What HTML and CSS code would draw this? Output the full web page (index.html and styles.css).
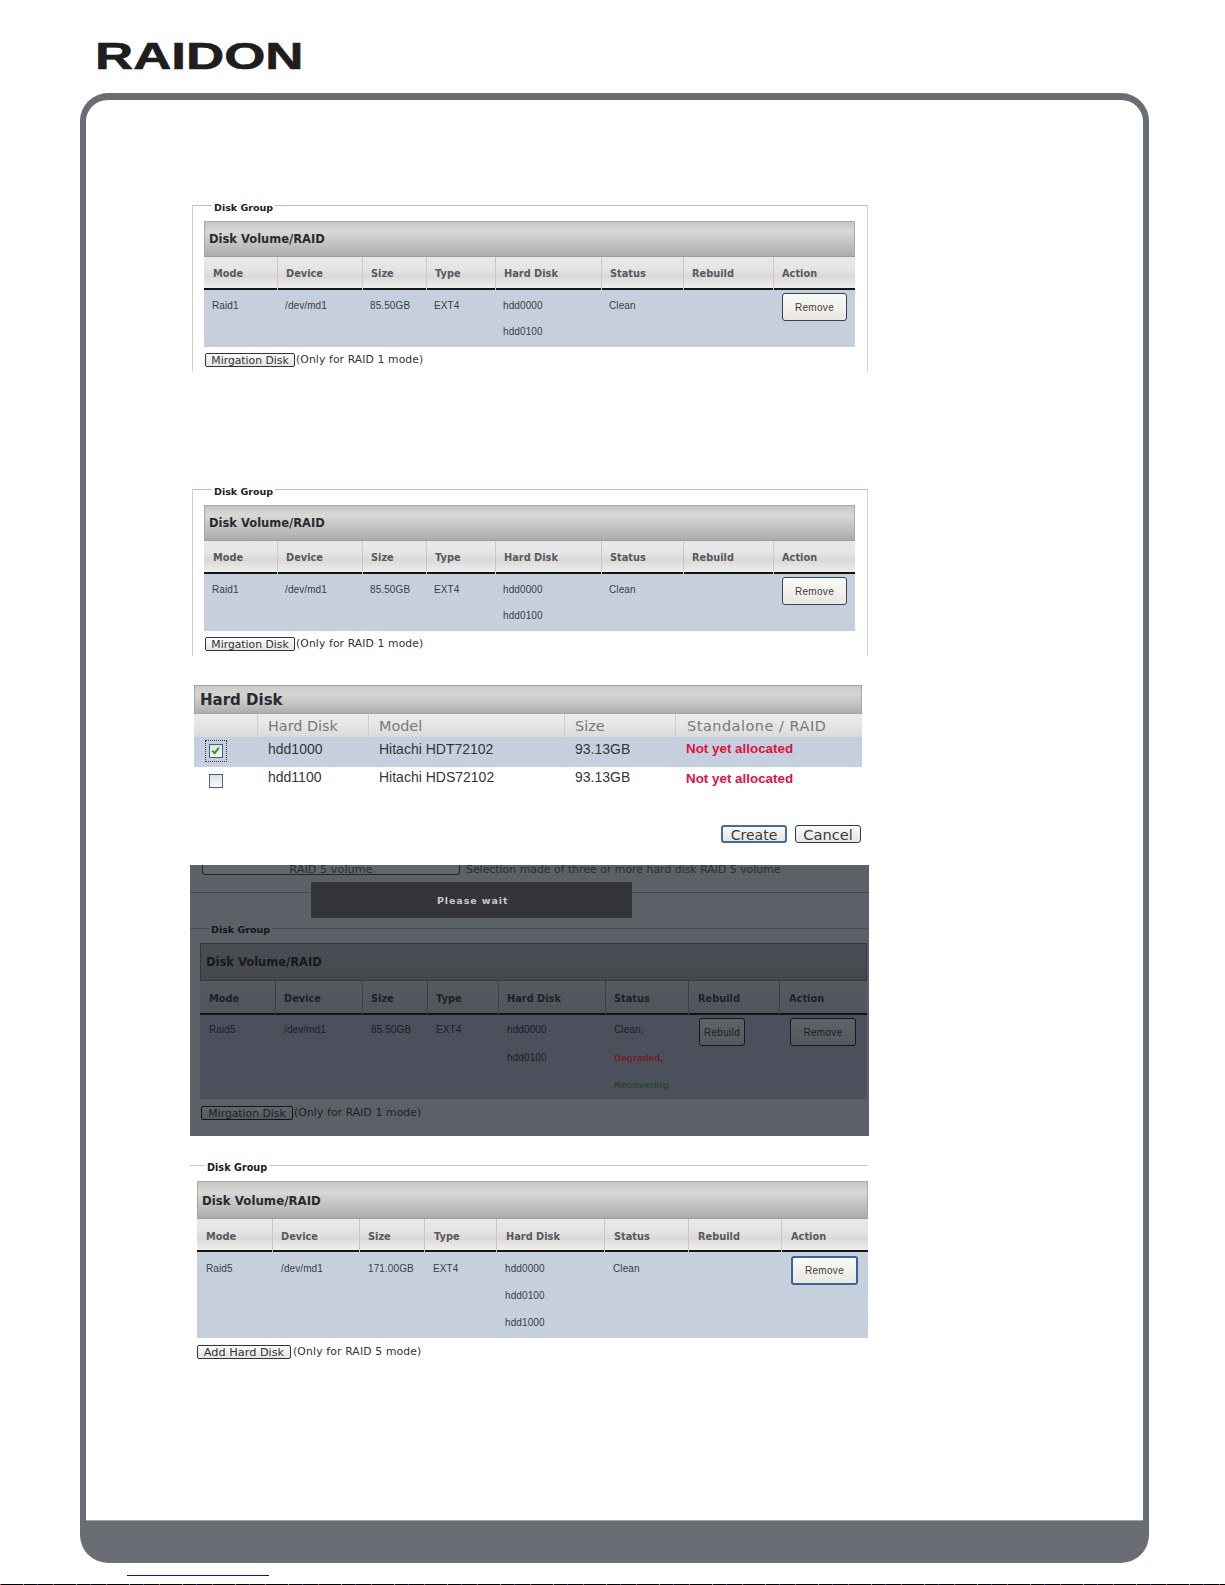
FILE: index.html
```html
<!DOCTYPE html>
<html lang="en">
<head>
<meta charset="utf-8">
<title>RAIDON</title>
<link rel="stylesheet" href="styles.css">
</head>
<body>
<header class="brand"><span class="logo">RAIDON</span></header>
<main class="sheet">
  <div class="sheet-inner">

    <section class="panel panel-boxed panel-first">
      <div class="legend">Disk Group</div>
      <div class="title">Disk Volume/RAID</div>
      <div class="grid cols">
        <div>Mode</div><div>Device</div><div>Size</div><div>Type</div><div>Hard Disk</div><div>Status</div><div>Rebuild</div><div>Action</div>
      </div>
      <div class="grid rows">
        <div class="ln">Raid1</div><div class="ln">/dev/md1</div><div class="ln">85.50GB</div><div class="ln">EXT4</div>
        <div><div class="ln">hdd0000</div><div class="ln">hdd0100</div></div>
        <div class="ln">Clean</div><div></div>
        <div><button class="btn-remove">Remove</button></div>
      </div>
      <div class="foot"><button class="btn-small btn-mig">Mirgation Disk</button><span>(Only for RAID 1 mode)</span></div>
    </section>

    <section class="panel panel-boxed panel-second">
      <div class="legend">Disk Group</div>
      <div class="title">Disk Volume/RAID</div>
      <div class="grid cols">
        <div>Mode</div><div>Device</div><div>Size</div><div>Type</div><div>Hard Disk</div><div>Status</div><div>Rebuild</div><div>Action</div>
      </div>
      <div class="grid rows">
        <div class="ln">Raid1</div><div class="ln">/dev/md1</div><div class="ln">85.50GB</div><div class="ln">EXT4</div>
        <div><div class="ln">hdd0000</div><div class="ln">hdd0100</div></div>
        <div class="ln">Clean</div><div></div>
        <div><button class="btn-remove">Remove</button></div>
      </div>
      <div class="foot"><button class="btn-small btn-mig">Mirgation Disk</button><span>(Only for RAID 1 mode)</span></div>
    </section>

    <section class="hard">
      <div class="hard-title">Hard Disk</div>
      <div class="hard-grid hard-cols">
        <div></div><div>Hard Disk</div><div>Model</div><div>Size</div><div>Standalone / RAID</div>
      </div>
      <div class="hard-grid hard-row hard-row-on">
        <div><span class="check check-focus"><svg viewBox="0 0 12 12" width="11" height="11"><path d="M2.5 6.2 5 9 9.8 3" fill="none" stroke="#2f9a3a" stroke-width="2.2"/></svg></span></div>
        <div>hdd1000</div><div>Hitachi HDT72102</div><div>93.13GB</div><div class="alert">Not yet allocated</div>
      </div>
      <div class="hard-grid hard-row">
        <div><span class="check"></span></div>
        <div>hdd1100</div><div>Hitachi HDS72102</div><div>93.13GB</div><div class="alert">Not yet allocated</div>
      </div>
      <div class="hard-actions">
        <button class="btn-act btn-create">Create</button>
        <button class="btn-act btn-cancel">Cancel</button>
      </div>
    </section>

    <section class="dark">
      <div class="dark-top">
        <button class="dark-volume">RAID 5 volume</button>
        <span class="dark-note">Selection made of three or more hard disk RAID 5 volume</span>
      </div>
      <div class="wait">Please wait</div>
      <div class="dark-group">
        <div class="legend">Disk Group</div>
        <div class="title">Disk Volume/RAID</div>
        <div class="grid cols">
          <div>Mode</div><div>Device</div><div>Size</div><div>Type</div><div>Hard Disk</div><div>Status</div><div>Rebuild</div><div>Action</div>
        </div>
        <div class="grid rows">
          <div class="ln">Raid5</div><div class="ln">/dev/md1</div><div class="ln">85.50GB</div><div class="ln">EXT4</div>
          <div><div class="ln">hdd0000</div><div class="ln">hdd0100</div></div>
          <div><div class="ln">Clean,</div><div class="ln"><b class="degraded">Degraded</b>,</div><div class="ln recovering">Recovering</div></div>
          <div><button class="btn-remove btn-rebuild">Rebuild</button></div>
          <div><button class="btn-remove">Remove</button></div>
        </div>
        <div class="foot"><button class="btn-small btn-mig">Mirgation Disk</button><span>(Only for RAID 1 mode)</span></div>
      </div>
    </section>

    <section class="panel panel-last">
      <div class="legend">Disk Group</div>
      <div class="title">Disk Volume/RAID</div>
      <div class="grid cols">
        <div>Mode</div><div>Device</div><div>Size</div><div>Type</div><div>Hard Disk</div><div>Status</div><div>Rebuild</div><div>Action</div>
      </div>
      <div class="grid rows">
        <div class="ln">Raid5</div><div class="ln">/dev/md1</div><div class="ln">171.00GB</div><div class="ln">EXT4</div>
        <div><div class="ln">hdd0000</div><div class="ln">hdd0100</div><div class="ln">hdd1000</div></div>
        <div class="ln">Clean</div><div></div>
        <div><button class="btn-remove">Remove</button></div>
      </div>
      <div class="foot"><button class="btn-small btn-add">Add Hard Disk</button><span>(Only for RAID 5 mode)</span></div>
    </section>

  </div>
</main>
<div class="rule-link"></div>
<div class="rule-dotted"></div>
</body>
</html>
```
FILE: styles.css
```css
* { box-sizing: border-box; }

html, body { margin: 0; padding: 0; background: #fff; }

body {
  width: 1225px;
  height: 1585px;
  overflow: hidden;
  display: flex;
  flex-direction: column;
  font-family: "Liberation Sans", Arial, sans-serif;
}

button { font: inherit; padding: 0; margin: 0; cursor: default; }

/* Brand */
.brand { height: 93px; flex: none; padding: 37px 0 0 95px; }
.logo {
  display: block;
  width: 150px;
  font-size: 37.5px;
  line-height: 38px;
  font-weight: 700;
  color: #201d1d;
  -webkit-text-stroke: 0.6px #201d1d;
  transform: scaleX(1.41);
  transform-origin: left center;
}

/* Frame */
.sheet {
  flex: none;
  margin-left: 80px;
  width: 1069px;
  height: 1470px;
  border: solid #6a6d74;
  border-width: 7px 6px 42px;
  border-radius: 28px;
  background: #fff;
}
.sheet-inner {
  height: 100%;
  border-bottom: 1px solid #a3a4a8;
  display: flex;
  flex-direction: column;
  align-items: flex-start;
}

/* Disk group panels */
.panel { --cols: 73px 85px 64px 69px 106px 82px 90px 82px; --step: 26px; }

.panel-boxed {
  width: 676px;
  height: 167px;
  margin-left: 106px;
  padding: 0 12px 0 11px;
  border: 1px solid #d6d0cc;
  border-top-color: #c4bcb8;
  border-bottom: 0;
}
.panel-first { margin-top: 105px; }
.panel-second { margin-top: 117px; }

.legend {
  width: fit-content;
  height: 12px;
  margin: -4px 0 7px 8px;
  padding: 0 2px;
  background: #fff;
  font: 700 9.5px/12px "DejaVu Sans", sans-serif;
  color: #1c1c1c;
}

.title {
  height: 36px;
  padding-left: 4px;
  border: 1px solid #a8a8a8;
  border-bottom-color: #9c9c9c;
  background: linear-gradient(#c6c6c4 0%, #d8d8d5 28%, #c4c5c3 60%, #abadac 100%);
  font: 700 11.5px/35px "DejaVu Sans", sans-serif;
  color: #2a2a2e;
}

.grid { display: grid; grid-template-columns: var(--cols); }

.cols {
  height: 33px;
  border-bottom: 2px solid #14161a;
  background: linear-gradient(#e9e9e9 0%, #e4e4e4 40%, #d9d9d9 62%, #efeeeb 100%);
  font: 700 9.8px/34px "DejaVu Sans", sans-serif;
  color: #58585b;
}
.cols > div { padding-left: 8px; border-left: 1px solid #cbc7c3; }
.cols > div:first-child { padding-left: 9px; border-left: 0; }

.rows {
  min-height: 57px;
  background: #c6d0dd;
  font-size: 10px;
  color: #3a3d40;
  letter-spacing: 0.1px;
}
.rows > div { padding-left: 8px; }
.rows > .ln { padding-top: 3px; height: calc(var(--step) + 3px); }
.rows > div > .ln:first-child { margin-top: 3px; }
.ln { line-height: var(--step); }

.rows > div:last-child { padding-left: 9px; }

.btn-remove {
  display: block;
  width: 65px;
  height: 28px;
  margin-top: 3px;
  border: 1px solid #2c4460;
  border-radius: 3px;
  background: linear-gradient(#fbfbf8, #e9e7de);
  font: 10px "Liberation Sans", sans-serif;
  color: #3d3d3d;
  letter-spacing: 0.3px;
}

.foot {
  display: flex;
  align-items: center;
  gap: 1px;
  height: 14px;
  margin-top: 6px;
  padding-left: 1px;
  font: 10.8px/18px "DejaVu Sans", sans-serif;
  letter-spacing: 0.1px;
  color: #333;
}
.btn-small {
  height: 14px;
  border: 1px solid #26384e;
  border-radius: 2px;
  background: linear-gradient(#fafafa, #e6e5dd);
  font: 10.8px/14px "DejaVu Sans", sans-serif;
  color: #333;
}
.btn-mig { width: 90px; }
.btn-add { width: 94px; font-size: 11.3px; }

/* Hard disk */
.hard { width: 668px; margin: 29px 0 0 108px; }
.hard-title {
  height: 29px;
  padding-left: 5px;
  border: 1px solid #a5a5a5;
  background: linear-gradient(#c9c9c7 0%, #d5d5d2 30%, #bdbebc 75%, #adadab 100%);
  font: 700 15px/29px "DejaVu Sans", sans-serif;
  color: #2a2a30;
}
.hard-grid { display: grid; grid-template-columns: 63px 111px 196px 111px 187px; }
.hard-cols {
  height: 23px;
  background: linear-gradient(#ececea 0%, #e6e6e4 45%, #dadad8 100%);
  font: 14.4px/24px "DejaVu Sans", sans-serif;
  color: #77787c;
}
.hard-cols > div { padding-left: 10px; border-left: 1px solid #cfcfcd; }
.hard-cols > div:first-child { border-left: 0; }
.hard-cols > div:last-child { padding-left: 11px; letter-spacing: 0.55px; }
.hard-row {
  height: 28px;
  font-size: 14px;
  line-height: 20px;
  color: #33363a;
}
.hard-row > div { padding-left: 11px; }
.hard-row-on { height: 30px; line-height: 24px; background: #c5d0de; }
.hard-row > div.alert { padding-left: 11px; font-size: 13.4px; line-height: 24px; font-weight: 700; color: #e20f3f; }
.hard-row > div:first-child { padding: 7px 0 0 15px; }

.check {
  display: block;
  width: 14px;
  height: 14px;
  border: 1.5px solid #4a5f73;
  background: linear-gradient(#dfe3e6, #f6f7f7);
}
.check svg { display: block; }
.check-focus { outline: 1px dotted #2c3440; outline-offset: 3px; }

.hard-actions {
  display: flex;
  justify-content: flex-end;
  gap: 8px;
  margin-top: 30px;
  padding-right: 1px;
}
.btn-act {
  width: 66px;
  height: 18px;
  border: 1px solid #2b3a4c;
  border-radius: 3px;
  background: linear-gradient(#fafafa, #e6e5dd);
  font: 14.6px/18px "DejaVu Sans", sans-serif;
  color: #3a3a3a;
}
.btn-create { border: 2px solid #3b6ea8; font-size: 14px; line-height: 16px; }

/* Dark (busy) panel */
.dark {
  --cols: 75px 87px 65px 71px 107px 83px 91px 88px;
  --step: 27.5px;
  position: relative;
  width: 679px;
  height: 271px;
  margin: 22px 0 0 104px;
  background: #5b6166;
}
.dark-top {
  display: flex;
  align-items: flex-start;
  gap: 6px;
  height: 28px;
  padding-left: 12px;
  border-bottom: 1px solid #484c50;
}
.dark-volume {
  width: 258px;
  height: 10px;
  border: 1px solid #23272c;
  border-top: 0;
  border-radius: 0 0 3px 3px;
  background: #61666c;
  font: 11.3px/8px "DejaVu Sans", sans-serif;
  color: #2a2e33;
  overflow: visible;
}
.dark-note { font: 10.9px/9px "DejaVu Sans", sans-serif; color: #2a2e33; }

.wait {
  position: absolute;
  left: 121px;
  top: 17px;
  width: 321px;
  height: 36px;
  padding-left: 126px;
  background: #333538;
  font: 700 9.5px/38px "DejaVu Sans", sans-serif;
  letter-spacing: 0.9px;
  color: #c9c9c9;
}

.dark-group {
  margin-top: 35px;
  padding: 0 2px 0 10px;
  border-top: 1px solid #484c50;
}
.dark .legend { background: #5b6166; color: #14161a; margin: -5px 0 7px 9px; }
.dark .title {
  height: 38px;
  padding-left: 5px;
  border-color: #34373b;
  background: linear-gradient(#4a4e54, #45484d);
  line-height: 36px;
  color: #17191c;
}
.dark .cols {
  height: 34px;
  border-bottom-color: #111316;
  background: linear-gradient(#565b62, #50555c);
  line-height: 35px;
  color: #1e2125;
}
.dark .cols > div { border-left-color: #3c4045; }
.dark .cols > div:nth-child(n+7) { padding-left: 9px; }
.dark .rows { min-height: 84px; background: #4b505c; color: #1c1f26; }
.dark .rows > div { padding-left: 9px; }
.dark .rows > .ln { padding-top: 1px; }
.dark .rows > div > .ln:first-child { margin-top: 1px; }
.dark .rows > div:nth-last-child(-n+2) { padding-left: 11px; }
.dark .btn-remove {
  width: 66px;
  margin-top: 3px;
  border-color: #16181c;
  background: linear-gradient(#5e6368, #55595f);
  color: #1c1f23;
}
.dark .btn-rebuild { width: 46px; }
.degraded { color: #7d1b24; font-size: 9.9px; }
.recovering { color: #27472a; font-weight: 700; font-size: 9.9px; }
.dark .foot { margin-top: 7px; color: #1e2125; }
.dark .btn-small {
  width: 92px;
  border-color: #14171a;
  background: linear-gradient(#62676c, #565b60);
  color: #1e2125;
}

/* Last panel */
.panel-last {
  --cols: 75px 87px 65px 72px 108px 84px 93px 87px;
  --step: 27px;
  width: 678px;
  margin: 29px 0 0 104px;
  padding-left: 7px;
  border-top: 1px solid #cfc6c2;
}
.panel-last .legend { margin: -4px 0 7px 8px; font-size: 9.7px; }
.panel-last .title { height: 38px; line-height: 38px; font-size: 11.8px; padding-left: 4px; }
.panel-last .cols { line-height: 36px; }
.panel-last .cols > div { padding-left: 9px; }
.panel-last .cols > div:nth-child(-n+3) { padding-left: 8px; }
.panel-last .cols > div:first-child { padding-left: 9px; }
.panel-last .rows { min-height: 86px; }
.panel-last .rows > div { padding-left: 9px; }
.panel-last .btn-remove {
  width: 67px;
  height: 29px;
  border: 2px solid #3a62a0;
  margin-top: 4px;
}
.panel-last .rows > div:last-child { padding-left: 10px; }
.panel-last .foot { margin-top: 7px; padding-left: 0; gap: 2px; letter-spacing: 0.15px; }

/* Page furniture */
.rule-link {
  flex: none;
  width: 142px;
  height: 1px;
  margin: 12px 0 0 127px;
  background: #0a0ad0;
}
.rule-dotted {
  flex: none;
  height: 1px;
  margin-top: 8px;
  background:
    repeating-linear-gradient(90deg, #e33 0 1px, #000 1px 23px, #3c3 23px 24px, #000 24px 37px, #33e 37px 38px, #000 38px 53px);
}
```
